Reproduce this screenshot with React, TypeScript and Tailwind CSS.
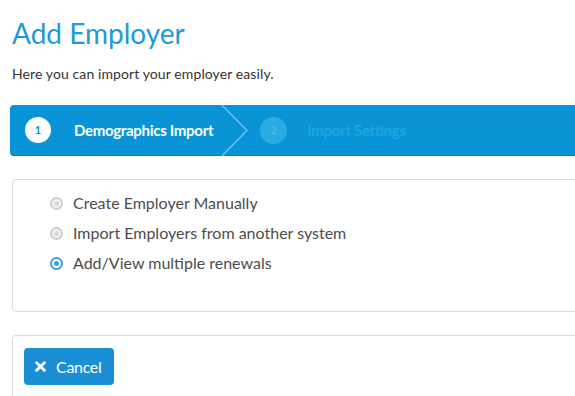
const options = [
  { label: "Create Employer Manually", checked: false },
  { label: "Import Employers from another system", checked: false },
  { label: "Add/View multiple renewals", checked: true },
];

function Radio({ checked }: { checked: boolean }) {
  if (checked) {
    return (
      <span className="flex h-[13px] w-[13px] items-center justify-center rounded-full bg-[#3aa3d9]">
        <span className="flex h-[9px] w-[9px] items-center justify-center rounded-full bg-white">
          <span className="h-[5px] w-[5px] rounded-full bg-[#3aa3d9]" />
        </span>
      </span>
    );
  }
  return (
    <span className="flex h-[13px] w-[13px] items-center justify-center rounded-full border-2 border-[#cfcfcf] bg-[#f4f4f4]">
      <span className="h-[5px] w-[5px] rounded-full bg-[#dadada]" />
    </span>
  );
}

export default function App() {
  return (
    <div className="h-[396px] w-[575px] overflow-hidden bg-white font-['Lato','Open_Sans',sans-serif]">
      <div className="pl-[10px]">
        <h1 className="ml-[2px] pt-[16px] text-[28px] leading-[34px] text-[#1e9ad6]">
          Add Employer
        </h1>
        <p className="ml-[2px] mt-[16px] text-[14px] leading-[16px] tracking-[0.1px] text-[#333]">
          Here you can import your employer easily.
        </p>

        {/* wizard steps */}
        <div className="mt-[23px] flex h-[51px] w-[600px] items-center rounded-l-[4px] border-b border-[#0a7fb8] bg-[#0894d6]">
          <span className="ml-[15px] flex h-[26px] w-[26px] items-center justify-center rounded-full bg-white text-[11px] font-bold text-[#0894d6]">
            1
          </span>
          <span className="ml-[23px] text-[15px] font-bold tracking-[-0.3px] text-white">
            Demographics Import
          </span>
          <svg className="ml-[8px] h-[51px] w-[27px]" viewBox="0 0 27 51">
            <path d="M1 0 L26 25.5 L1 51" fill="none" stroke="#7fcaf0" strokeWidth="1.2" />
          </svg>
          <span className="ml-[12px] flex h-[27px] w-[27px] items-center justify-center rounded-full bg-[#2aabe2] text-[11px] text-[#52bfea]">
            2
          </span>
          <span className="ml-[20px] text-[15px] font-bold tracking-[-0.3px] text-[#23a3de]">
            Import Settings
          </span>
        </div>
      </div>

      <div className="pl-[12px]">
        <div className="mt-[23px] h-[133px] w-[600px] rounded-[4px] border border-[#dcdcdc] pl-[37px] pt-[8px]">
          {options.map((o) => (
            <div key={o.label} className="flex h-[30px] items-center gap-[10px]">
              <Radio checked={o.checked} />
              <span className="text-[16px] text-[#4d4d4d]">{o.label}</span>
            </div>
          ))}
        </div>

        <div className="mt-[23px] h-[100px] w-[600px] rounded-[4px] border border-[#dcdcdc] pl-[11px] pt-[12px]">
          <button className="flex h-[37px] w-[90px] items-center rounded-[4px] bg-[#1a8fd6] pl-[11px] text-[16px] text-white">
            <svg className="h-[11px] w-[11px]" viewBox="0 0 10 10">
              <path d="M1.5 1.5 L8.5 8.5 M8.5 1.5 L1.5 8.5" stroke="white" strokeWidth="2.6" strokeLinecap="round" />
            </svg>
            <span className="ml-[10px] tracking-[-0.3px]">Cancel</span>
          </button>
        </div>
      </div>
    </div>
  );
}
